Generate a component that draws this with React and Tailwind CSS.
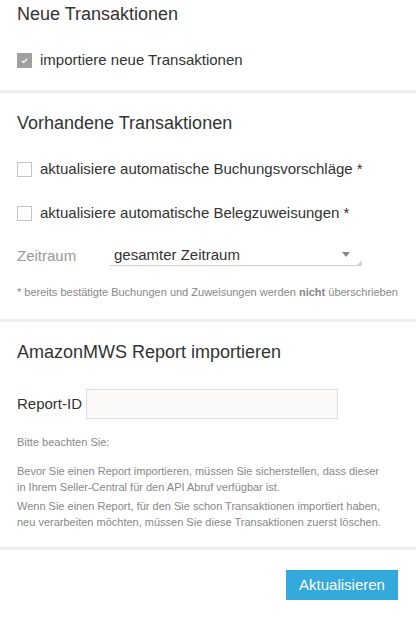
import React from 'react';

function Checkbox({ checked, label }) {
  return (
    <label className="flex items-center gap-2 h-5 text-[15px] text-[#333]">
      {checked ? (
        <span className="w-[15px] h-[15px] bg-[#a0a0a0] flex items-center justify-center">
          <svg width="9" height="9" viewBox="0 0 10 10">
            <path d="M2 5.2 L4.2 7.2 L8 3" fill="none" stroke="#fff" strokeWidth="1.4" />
          </svg>
        </span>
      ) : (
        <span className="w-[15px] h-[15px] border border-[#c4c4c4] bg-white" />
      )}
      <span>{label}</span>
    </label>
  );
}

function Divider() {
  return <div className="h-[3px] bg-[#f0efeb]" />;
}

export default function App() {
  return (
    <div className="w-[416px] min-h-[617px] bg-white font-['Liberation_Sans',Arial,sans-serif]">
      {/* Neue Transaktionen */}
      <section className="px-[17px] pt-1 pb-5">
        <h2 className="text-[18px] leading-5 text-[#333]">Neue Transaktionen</h2>
        <div className="mt-[26px]">
          <Checkbox checked label="importiere neue Transaktionen" />
        </div>
      </section>

      <Divider />

      {/* Vorhandene Transaktionen */}
      <section className="px-[17px] pt-5 pb-5">
        <h2 className="text-[18px] leading-5 text-[#333]">Vorhandene Transaktionen</h2>
        <div className="mt-[26px]">
          <Checkbox label="aktualisiere automatische Buchungsvorschläge *" />
        </div>
        <div className="mt-6">
          <Checkbox label="aktualisiere automatische Belegzuweisungen *" />
        </div>
        <div className="mt-[23px] flex items-center h-5">
          <span className="w-[93px] text-[15px] text-[#999]">Zeitraum</span>
          <div className="relative w-[252px] h-5 border-b border-[#d0d0d0] flex items-center pl-1 text-[15px] text-[#333]">
            gesamter Zeitraum
            <svg className="absolute right-[12px] top-[6px]" width="8" height="5" viewBox="0 0 8 5">
              <path d="M0 0 H8 L4 5 Z" fill="#8a8a8a" />
            </svg>
            <svg className="absolute right-0 bottom-0" width="5" height="5" viewBox="0 0 5 5">
              <path d="M5 0 V5 H0 Z" fill="#d6d6d6" />
            </svg>
          </div>
        </div>
        <p className="mt-[19px] text-[11px] leading-[14px] text-[#888]">
          * bereits bestätigte Buchungen und Zuweisungen werden <b className="font-bold">nicht</b> überschrieben
        </p>
      </section>

      <Divider />

      {/* AmazonMWS Report importieren */}
      <section className="px-[17px] pt-5 pb-[17px]">
        <h2 className="text-[18px] leading-5 text-[#333]">AmazonMWS Report importieren</h2>
        <div className="mt-[27px] flex items-center gap-1">
          <span className="text-[15px] text-[#333]">Report-ID</span>
          <input className="w-[252px] h-[30px] bg-[#faf9f7] border border-[#dcdcdc] outline-none" />
        </div>
        <p className="mt-4 text-[11px] leading-[14px] text-[#888]">Bitte beachten Sie:</p>
        <p className="mt-[14px] text-[11px] leading-4 text-[#888]">
          Bevor Sie einen Report importieren, müssen Sie sicherstellen, dass dieser<br />
          in Ihrem Seller-Central für den API Abruf verfügbar ist.
        </p>
        <p className="mt-[3px] text-[11px] leading-4 text-[#888]">
          Wenn Sie einen Report, für den Sie schon Transaktionen importiert haben,<br />
          neu verarbeiten möchten, müssen Sie diese Transaktionen zuerst löschen.
        </p>
      </section>

      <Divider />

      <div className="flex justify-end pt-5 pr-[18px]">
        <button className="w-[112px] h-[30px] bg-[#33a9dc] text-white text-[15px]">Aktualisieren</button>
      </div>
    </div>
  );
}
